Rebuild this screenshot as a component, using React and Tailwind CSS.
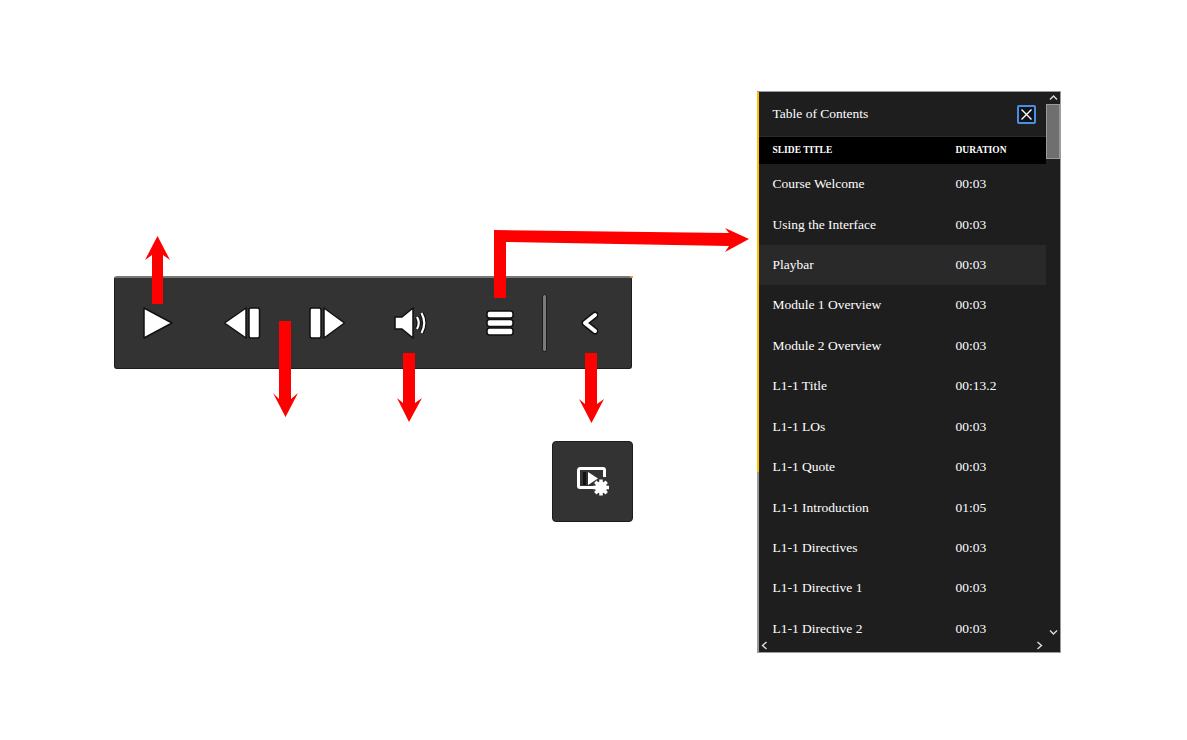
const rows = [
  ["Course Welcome", "00:03"],
  ["Using the Interface", "00:03"],
  ["Playbar", "00:03"],
  ["Module 1 Overview", "00:03"],
  ["Module 2 Overview", "00:03"],
  ["L1-1 Title", "00:13.2"],
  ["L1-1 LOs", "00:03"],
  ["L1-1 Quote", "00:03"],
  ["L1-1 Introduction", "01:05"],
  ["L1-1 Directives", "00:03"],
  ["L1-1 Directive 1", "00:03"],
  ["L1-1 Directive 2", "00:03"],
];

const outline = { stroke: "#111", strokeWidth: 1.5, fill: "#fff", strokeLinejoin: "round" };

function Playbar() {
  return (
    <div className="absolute left-[114px] top-[276px] flex h-[93px] w-[518px] items-center rounded-[3px] border border-[#1c1c1c] border-t-2 border-t-[#777] bg-[#333333]">
      <svg width="32" height="34" viewBox="0 0 32 34" className="ml-[27px]">
        <path d="M2 2 L30 17 L2 32 Z" {...outline} />
      </svg>
      <svg width="38" height="34" viewBox="0 0 38 34" className="ml-[49px]">
        <path d="M23 2 V32 L1.500 17 Z" {...outline} />
        <rect x="26" y="2" width="10.500" height="30" rx="2" {...outline} />
      </svg>
      <svg width="37" height="34" viewBox="0 0 37 34" className="ml-[48px]">
        <rect x="1" y="2" width="11" height="30" rx="2" {...outline} />
        <path d="M15 2 V32 L35.500 17 Z" {...outline} />
      </svg>
      <svg width="34" height="32" viewBox="0 0 34 32" className="ml-[48px]">
        <path d="M1 10 H8 L19 1 V31 L8 22 H1 Z" {...outline} />
        <path d="M23 10 Q26.500 16 23 22" fill="none" stroke="#111" strokeWidth="4.500" />
        <path d="M27.500 6 Q33 16 27.500 26" fill="none" stroke="#111" strokeWidth="4.500" />
        <path d="M23 10 Q26.500 16 23 22" fill="none" stroke="#fff" strokeWidth="2.200" />
        <path d="M27.500 6 Q33 16 27.500 26" fill="none" stroke="#fff" strokeWidth="2.200" />
      </svg>
      <svg width="28" height="26" viewBox="0 0 28 26" className="ml-[58px]">
        <rect x="1" y="1" width="26" height="7" rx="2.500" {...outline} />
        <rect x="1" y="9.500" width="26" height="7" rx="2.500" {...outline} />
        <rect x="1" y="18" width="26" height="7" rx="2.500" {...outline} />
      </svg>
      <div className="ml-[28px] h-[58px] w-[5px] rounded-sm border border-[#1c1c1c] bg-[#7a7a7a]" />
      <svg width="18" height="24" viewBox="0 0 18 24" className="ml-[33px]">
        <path d="M15 4 L5 12 L15 20" fill="none" stroke="#111" strokeWidth="7" strokeLinecap="round" strokeLinejoin="round" />
        <path d="M15 4 L5 12 L15 20" fill="none" stroke="#fff" strokeWidth="4" strokeLinecap="round" strokeLinejoin="round" />
      </svg>
      <div className="absolute right-[-2px] top-[-2px] h-[2px] w-[2px] bg-[#f5a623]" />
    </div>
  );
}

function SettingsTile() {
  return (
    <div className="absolute left-[552px] top-[441px] flex h-[81px] w-[81px] items-center justify-center rounded-[4px] border border-[#1c1c1c] bg-[#333333]">
      <svg width="32" height="29" viewBox="0 0 32 29" className="ml-[1px]">
        <path d="M18 20.500 H3 a1.500 1.500 0 0 1 -1.500 -1.500 V3 a1.500 1.500 0 0 1 1.500 -1.500 H26 a1.500 1.500 0 0 1 1.500 1.500 V10" fill="none" stroke="#fff" strokeWidth="3" />
        <path d="M11 5 L21 11.500 L11 18 Z" fill="#fff" />
        <rect x="6" y="5" width="3" height="13" fill="#111" />
        <circle cx="24" cy="20.500" r="6" fill="#fff" />
        <path d="M24 12.500 V28.500 M16 20.500 H32 M18.300 14.800 L29.700 26.200 M29.700 14.800 L18.300 26.200" stroke="#fff" strokeWidth="3.500" />
      </svg>
    </div>
  );
}

function Toc() {
  return (
    <div className="absolute left-[757px] top-[91px] flex h-[562px] w-[304px] border border-l-0 border-[#9a9a9a] bg-[#1e1e1e] font-['Liberation_Serif',serif] text-white">
      <div className="absolute left-0 top-0 h-full w-[2px] bg-[#9a9a9a]" />
      <div className="absolute left-0 top-0 h-[380px] w-[2px] bg-[#ffbf00]" />
      <div className="flex min-w-0 flex-1 flex-col">
        <div className="flex min-h-0 flex-1 flex-col overflow-hidden pl-[2px]">
          <div className="flex h-[44px] shrink-0 items-center justify-between pl-[13.5px] pr-[10px] text-[13.5px]">
            <span>Table of Contents</span>
            <span className="flex h-[19px] w-[19px] items-center justify-center rounded-[2px] border-2 border-[#4a90e2] bg-[#10131a]">
              <svg width="13" height="13" viewBox="0 0 13 13">
                <path d="M1.500 1.500 L11.500 11.500 M11.500 1.500 L1.500 11.500" stroke="#fff" strokeWidth="1.400" />
              </svg>
            </span>
          </div>
          <div className="flex h-[28px] shrink-0 items-center border-t border-[#2c2c2c] bg-black pl-[13.5px] text-[9.5px] font-bold">
            <span className="w-[183px]">SLIDE TITLE</span>
            <span>DURATION</span>
          </div>
          {rows.map(([title, time], i) => (
            <div key={title} className={`flex h-[40.45px] shrink-0 items-center pl-[13.5px] text-[13.5px] ${i === 2 ? "bg-[#292929]" : ""}`}>
              <span className="w-[183px]">{title}</span>
              <span>{time}</span>
            </div>
          ))}
        </div>
        <div className="flex h-[13px] shrink-0 items-center justify-between pl-[4px] pr-[3px] text-[#dddddd]">
          <svg width="7" height="9" viewBox="0 0 7 9"><path d="M5.500 1 L1.500 4.500 L5.500 8" fill="none" stroke="currentColor" strokeWidth="1.400" /></svg>
          <svg width="7" height="9" viewBox="0 0 7 9"><path d="M1.500 1 L5.500 4.500 L1.500 8" fill="none" stroke="currentColor" strokeWidth="1.400" /></svg>
        </div>
      </div>
      <div className="flex w-[14px] shrink-0 flex-col items-center text-[#dddddd]">
        <svg width="9" height="12" viewBox="0 0 9 12" className="shrink-0"><path d="M1 7.500 L4.500 4 L8 7.500" fill="none" stroke="currentColor" strokeWidth="1.400" /></svg>
        <div className="h-[55px] w-full border border-[#999] bg-[#6f6f6f]" />
        <div className="flex-1" />
        <svg width="9" height="12" viewBox="0 0 9 12" className="mb-[14px] shrink-0"><path d="M1 4.500 L4.500 8 L8 4.500" fill="none" stroke="currentColor" strokeWidth="1.400" /></svg>
      </div>
    </div>
  );
}

function Arrows() {
  return (
    <svg width="1187" height="740" viewBox="0 0 1187 740" className="pointer-events-none absolute left-0 top-0">
      <g fill="#ff0000">
        <path d="M152 304 V255 L145 260 L157.500 236 L170 260 L163 255 V304 Z" />
        <path d="M279 321 H291 V399 L298 393 L285.500 417 L273 393 L279 399 Z" />
        <path d="M403 353 H415 V403 L422 398 L409 422 L397 398 L403 403 Z" />
        <path d="M585 353 H597 V404 L604 399 L591.500 423 L579 399 L585 404 Z" />
        <path d="M494 298 V230 L729 233 L725 228 L749 239 L725 252 L729 246 L506 242 V298 Z" />
      </g>
    </svg>
  );
}

export default function App() {
  return (
    <div className="relative h-[740px] w-[1187px] overflow-hidden bg-white">
      <Playbar />
      <SettingsTile />
      <Toc />
      <Arrows />
    </div>
  );
}
